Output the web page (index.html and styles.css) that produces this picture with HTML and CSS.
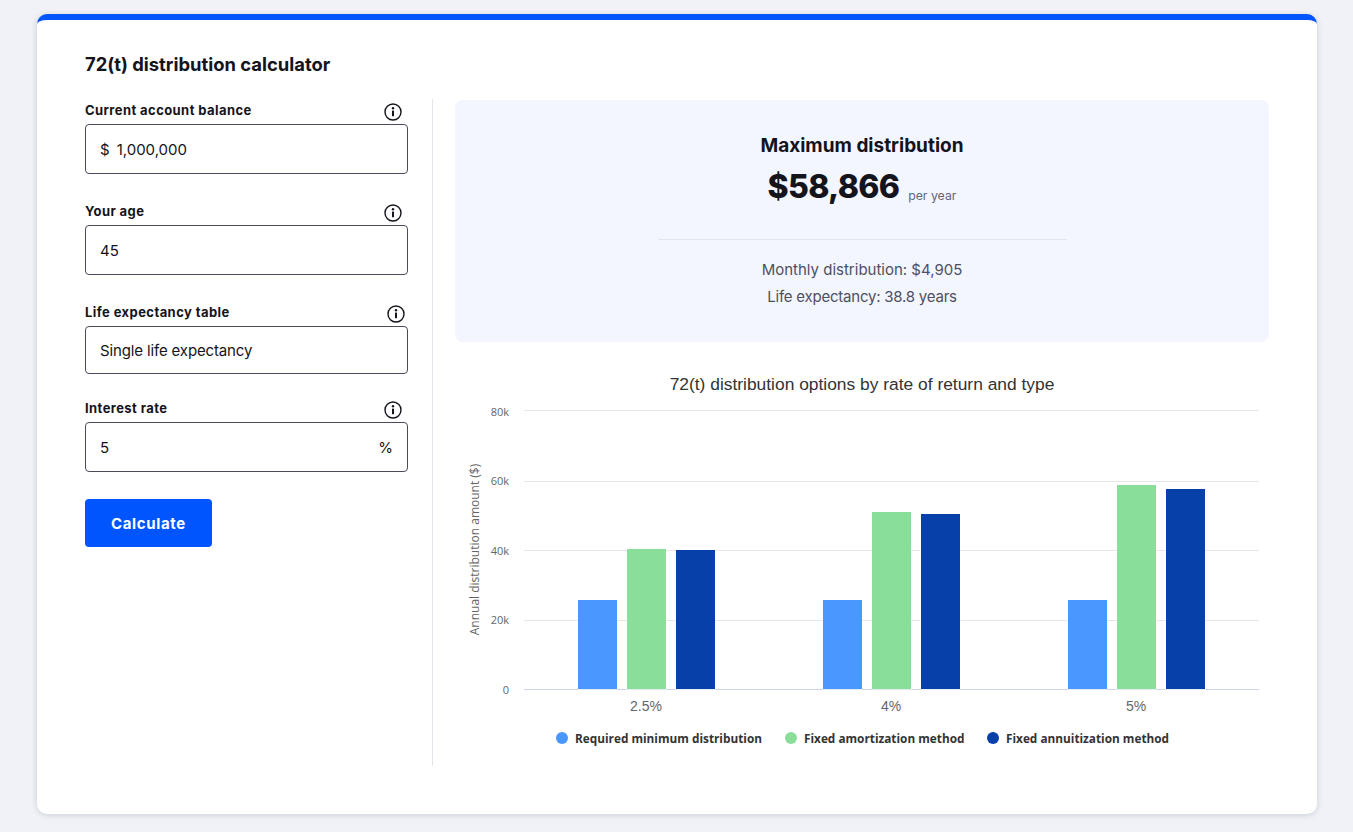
FILE: index.html
```html
<!DOCTYPE html>
<html lang="en">
<head>
<meta charset="utf-8">
<title>72(t) distribution calculator</title>
<link rel="stylesheet" href="styles.css">
</head>
<body>
<main class="card">
  <h1 class="title">72(t) distribution calculator</h1>
  <div class="columns">
    <form class="form">
      <div class="field">
        <div class="label-row"><span class="label">Current account balance</span>
          <svg class="info" viewBox="0 0 18 18"><circle cx="9" cy="9" r="8" /><rect x="8" y="7.6" width="2" height="5.6"/><circle class="dot" cx="9" cy="5.2" r="1.2"/></svg></div>
        <div class="input"><span class="prefix">$</span><span>1,000,000</span></div>
      </div>
      <div class="field">
        <div class="label-row"><span class="label">Your age</span>
          <svg class="info" viewBox="0 0 18 18"><circle cx="9" cy="9" r="8" /><rect x="8" y="7.6" width="2" height="5.6"/><circle class="dot" cx="9" cy="5.2" r="1.2"/></svg></div>
        <div class="input"><span>45</span></div>
      </div>
      <div class="field field-select">
        <div class="label-row label-row-select"><span class="label">Life expectancy table</span>
          <svg class="info" viewBox="0 0 18 18"><circle cx="9" cy="9" r="8" /><rect x="8" y="7.6" width="2" height="5.6"/><circle class="dot" cx="9" cy="5.2" r="1.2"/></svg></div>
        <div class="input input-select"><span>Single life expectancy</span></div>
      </div>
      <div class="field">
        <div class="label-row"><span class="label">Interest rate</span>
          <svg class="info" viewBox="0 0 18 18"><circle cx="9" cy="9" r="8" /><rect x="8" y="7.6" width="2" height="5.6"/><circle class="dot" cx="9" cy="5.2" r="1.2"/></svg></div>
        <div class="input input-split"><span>5</span><span>%</span></div>
      </div>
      <button class="button" type="button">Calculate</button>
    </form>
    <section class="results">
      <div class="panel">
        <h2 class="panel-title">Maximum distribution</h2>
        <p class="amount-row"><span class="amount">$58,866</span><span class="per">per year</span></p>
        <hr class="rule">
        <p class="detail">Monthly distribution: $4,905</p>
        <p class="detail detail-tight">Life expectancy: 38.8 years</p>
      </div>
      <svg class="chart" viewBox="455 366 814 400" width="814" height="400">
        <text class="chart-title" x="862" y="390" text-anchor="middle">72(t) distribution options by rate of return and type</text>
        <g class="grid">
          <line x1="524" x2="1259" y1="410.5" y2="410.5"/>
          <line x1="524" x2="1259" y1="481.5" y2="481.5"/>
          <line x1="524" x2="1259" y1="550.5" y2="550.5"/>
          <line x1="524" x2="1259" y1="620.5" y2="620.5"/>
        </g>
        <line class="axis" x1="524" x2="1259" y1="689.5" y2="689.5"/>
        <g class="y-labels" text-anchor="end">
          <text x="509" y="416">80k</text>
          <text x="509" y="485">60k</text>
          <text x="509" y="555">40k</text>
          <text x="509" y="624">20k</text>
          <text x="509" y="694">0</text>
        </g>
        <text class="y-title" transform="translate(479 549.5) rotate(-90)" text-anchor="middle">Annual distribution amount ($)</text>
        <g class="bars">
          <rect class="c1" x="578" y="600" width="39" height="89"/>
          <rect class="c2" x="627" y="549" width="39" height="140"/>
          <rect class="c3" x="676" y="550" width="39" height="139"/>
          <rect class="c1" x="823" y="600" width="39" height="89"/>
          <rect class="c2" x="872" y="512" width="39" height="177"/>
          <rect class="c3" x="921" y="514" width="39" height="175"/>
          <rect class="c1" x="1068" y="600" width="39" height="89"/>
          <rect class="c2" x="1117" y="485" width="39" height="204"/>
          <rect class="c3" x="1166" y="489" width="39" height="200"/>
        </g>
        <g class="x-labels" text-anchor="middle">
          <text x="646" y="711">2.5%</text>
          <text x="891" y="711">4%</text>
          <text x="1136" y="711">5%</text>
        </g>
        <g class="legend">
          <circle class="c1" cx="562" cy="738" r="6"/>
          <text x="575" y="742.5">Required minimum distribution</text>
          <circle class="c2" cx="791" cy="738" r="6"/>
          <text x="804" y="742.5">Fixed amortization method</text>
          <circle class="c3" cx="993" cy="738" r="6"/>
          <text x="1006" y="742.5">Fixed annuitization method</text>
        </g>
      </svg>
    </section>
  </div>
</main>
</body>
</html>
```
FILE: styles.css
```css
* { box-sizing: border-box; }
html, body { margin: 0; height: 100%; }
body {
  background: #f0f2f7;
  padding: 14px 36px 18px 37px;
  font-family: Inter, "Noto Sans", sans-serif;
  color: #14141c;
  overflow: hidden;
}
.card {
  height: 800px;
  background: #fff;
  border-top: 6px solid #0055ff;
  border-radius: 10px;
  box-shadow: 0 1px 6px rgba(40, 50, 80, 0.18);
  padding: 33px 48px 48px;
}
.title {
  margin: 0 0 24px;
  font-size: 18.4px;
  line-height: 22px;
  font-weight: 700;
}
.columns {
  display: flex;
  height: 667px;
}
.form {
  width: 348px;
  flex: none;
  padding-right: 24px;
  border-right: 1px solid #e3e5ec;
  padding-top: 1px;
}
.field { margin-bottom: 27px; }
.field-select { margin-bottom: 24px; }
.label-row {
  display: flex;
  justify-content: space-between;
  align-items: flex-end;
  height: 24px;
  padding: 0 6px 3px 0;
}
.label-row-select { padding-right: 3px; }
.label {
  font-size: 13px;
  line-height: 20px;
  font-weight: 700;
  letter-spacing: 0.42px;
  margin-bottom: 1px;
}
.info {
  width: 18px;
  height: 18px;
  flex: none;
  overflow: visible;
}
.info circle { fill: none; stroke: #14141c; stroke-width: 1.4; }
.info rect, .info .dot { fill: #14141c; stroke: none; }
.input {
  display: flex;
  align-items: center;
  gap: 7px;
  height: 50px;
  padding: 0 14px;
  border: 1px solid #4a4b5c;
  border-radius: 4px;
  font-size: 15px;
  color: #14141c;
}
.input-select { height: 48px; letter-spacing: -0.14px; }
.input-split { justify-content: space-between; }
.button {
  display: block;
  width: 127px;
  height: 48px;
  border: 0;
  border-radius: 4px;
  background: #0055ff;
  color: #fff;
  font-family: inherit;
  font-size: 15px;
  font-weight: 700;
  letter-spacing: 0.65px;
}
.results {
  margin-left: 22px;
  width: 814px;
  flex: none;
}
.panel {
  height: 242px;
  margin-top: 1px;
  padding-top: 34px;
  background: #f4f6ff;
  border-radius: 8px;
  text-align: center;
}
.panel-title {
  margin: 0;
  font-size: 19px;
  line-height: 24px;
  font-weight: 700;
}
.amount-row {
  display: flex;
  justify-content: center;
  align-items: flex-end;
  gap: 9px;
  margin: 7px 0 0;
  height: 44px;
}
.amount { font-size: 32px; line-height: 44px; font-weight: 800; letter-spacing: -0.7px; }
.per { font-size: 12.3px; line-height: 16px; padding-bottom: 5px; color: #63657a; }
.rule {
  width: 409px;
  height: 1px;
  margin: 30px auto 20px;
  border: 0;
  background: #e3e5ec;
}
.detail {
  margin: 0 0 7px;
  font-size: 15px;
  line-height: 20px;
  color: #4d4f62;
}
.detail-tight { letter-spacing: -0.22px; }
.chart {
  display: block;
  margin-top: 24px;
}
.chart-title { font-family: "Liberation Sans", Arial, sans-serif; font-size: 17.4px; fill: #333; }
.grid line { stroke: #e6e6e6; stroke-width: 1; }
.axis { stroke: #ccd6eb; stroke-width: 1; }
.y-labels text { font-family: "Open Sans", sans-serif; font-size: 11px; fill: #666; }
.y-title { font-family: "Open Sans", sans-serif; font-size: 12px; fill: #666; }
.x-labels text { font-family: "Liberation Sans", Arial, sans-serif; font-size: 14px; fill: #666; }
.bars rect { stroke: #fff; stroke-width: 1; paint-order: stroke; }
.c1 { fill: #4a98ff; }
.c2 { fill: #89de99; }
.c3 { fill: #0640a8; }
.legend text { font-family: "Open Sans", sans-serif; font-size: 11.8px; font-weight: 700; fill: #333; }
```
